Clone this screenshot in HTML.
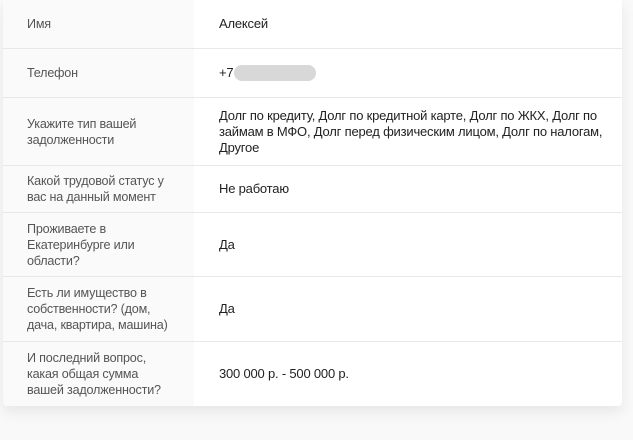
<!DOCTYPE html>
<html><head><meta charset="utf-8"><style>
body{margin:0;width:633px;height:440px;background:#f9f9f9;font-family:"Liberation Sans",sans-serif;overflow:hidden}
.card{position:absolute;left:3px;top:0;width:619px;height:406px;background:#fff;border-radius:0 0 4px 4px;box-shadow:0 6px 14px rgba(0,0,0,.08);overflow:hidden}
.row{position:absolute;left:0;width:619px;border-bottom:1px solid #e8e8e8;box-sizing:border-box}
.row:last-child{border-bottom:none}
.l{position:absolute;left:0;top:0;bottom:0;width:191px;background:#fafafa;display:flex;align-items:center;padding-left:24px;box-sizing:border-box;font-size:12.6px;line-height:16px;color:#555;letter-spacing:-0.2px}
.v{position:absolute;left:216px;top:0;bottom:0;display:flex;align-items:center;font-size:13px;line-height:16px;color:#222;letter-spacing:-0.2px;white-space:nowrap}
.blur{display:inline-block;width:82px;height:16px;border-radius:8px;background:#d8d8d8;margin-left:1px;vertical-align:middle}
</style></head><body><div class="card">
<div class="row" style="top:0;height:49px"><div class="l">Имя</div><div class="v">Алексей</div></div>
<div class="row" style="top:49px;height:49px"><div class="l">Телефон</div><div class="v">+7<span class="blur"></span></div></div>
<div class="row" style="top:98px;height:68px"><div class="l">Укажите тип вашей<br>задолженности</div><div class="v">Долг по кредиту, Долг по кредитной карте, Долг по ЖКХ, Долг по<br>займам в МФО, Долг перед физическим лицом, Долг по налогам,<br>Другое</div></div>
<div class="row" style="top:166px;height:47px"><div class="l">Какой трудовой статус у<br>вас на данный момент</div><div class="v">Не работаю</div></div>
<div class="row" style="top:213px;height:64px"><div class="l">Проживаете в<br>Екатеринбурге или<br>области?</div><div class="v">Да</div></div>
<div class="row" style="top:277px;height:65px"><div class="l">Есть ли имущество в<br>собственности? (дом,<br>дача, квартира, машина)</div><div class="v">Да</div></div>
<div class="row" style="top:342px;height:64px"><div class="l">И последний вопрос,<br>какая общая сумма<br>вашей задолженности?</div><div class="v">300 000 р. - 500 000 р.</div></div>
</div></body></html>
